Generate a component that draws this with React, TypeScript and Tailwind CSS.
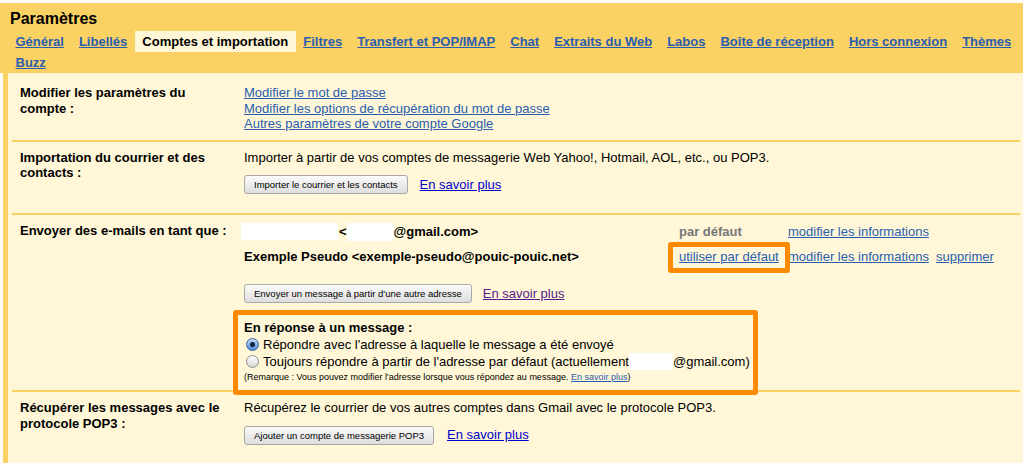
import React from 'react';

const tabs = [
  'Général',
  'Libellés',
  'Comptes et importation',
  'Filtres',
  'Transfert et POP/IMAP',
  'Chat',
  'Extraits du Web',
  'Labos',
  'Boîte de réception',
  'Hors connexion',
  'Thèmes',
  'Buzz',
];

const linkCls = 'text-[#2a5db0] underline';

const GrayButton = ({ children }: { children: React.ReactNode }) => (
  <button className="h-[19px] rounded-[3px] border border-[#a8a8a8] bg-gradient-to-b from-[#fbfbfb] to-[#dedede] px-[9px] text-[9.5px] leading-[17px] text-black whitespace-nowrap">
    {children}
  </button>
);

const Radio = ({ checked }: { checked?: boolean }) =>
  checked ? (
    <span className="inline-flex h-[13px] w-[13px] shrink-0 items-center justify-center rounded-full border border-[#3d5f9a] bg-gradient-to-b from-[#c4dcf6] to-[#4a8ad8]">
      <span className="h-[5px] w-[5px] rounded-full bg-[#10213f]" />
    </span>
  ) : (
    <span className="inline-block h-[13px] w-[13px] shrink-0 rounded-full border border-[#8d8d8d] bg-gradient-to-b from-white to-[#d6d6d6]" />
  );

const Row = ({
  label,
  first,
  className,
  children,
}: {
  label: string;
  first?: boolean;
  className?: string;
  children: React.ReactNode;
}) => (
  <div className={`flex pt-[8px] ${first ? '' : 'border-t-2 border-[#fad163]'} ${className ?? ''}`}>
    <div className="w-[232px] shrink-0 pl-[8px] pr-[16px] font-bold text-black">{label}</div>
    <div className="flex-1">{children}</div>
  </div>
);

export default function App() {
  return (
    <div className="h-[463px] overflow-hidden bg-white pt-[3px] font-['Liberation_Sans',Arial,sans-serif] text-[13px] leading-[15.5px] text-black">
      {/* header */}
      <div className="bg-[#fad163]">
        <div className="h-[28px] pl-[10px] pt-[6px] text-[16px] font-bold leading-[20px]">Paramètres</div>
        <div className="flex flex-wrap pl-[8px]">
          {tabs.map((t) =>
            t === 'Comptes et importation' ? (
              <span key={t} className="h-[21px] whitespace-nowrap bg-[#fff7d7] px-[7.5px] font-bold leading-[21px] text-black">
                {t}
              </span>
            ) : (
              <span key={t} className="h-[21px] whitespace-nowrap px-[7.5px] font-bold leading-[21px]">
                <a className="text-[#2a5db0] underline" href="#">
                  {t}
                </a>
              </span>
            ),
          )}
        </div>
      </div>

      {/* content */}
      <div className="ml-[3px] h-full border-l-[5px] border-[#fad163] bg-[#fff7d7] pl-[4px] pr-[3px] pt-[4px]">
        <Row label="Modifier les paramètres du compte :" first className="pb-[8px]">
          <div className="flex flex-col items-start">
            <a className={linkCls} href="#">Modifier le mot de passe</a>
            <a className={linkCls} href="#">Modifier les options de récupération du mot de passe</a>
            <a className={linkCls} href="#">Autres paramètres de votre compte Google</a>
          </div>
        </Row>

        <Row label="Importation du courrier et des contacts :" className="pb-[19px]">
          <div>Importer à partir de vos comptes de messagerie Web Yahoo!, Hotmail, AOL, etc., ou POP3.</div>
          <div className="mt-[10px] flex items-center gap-[12px]">
            <GrayButton>Importer le courrier et les contacts</GrayButton>
            <a className="text-[#0000cc] underline" href="#">En savoir plus</a>
          </div>
        </Row>

        <Row label="Envoyer des e-mails en tant que :">
          <div className="grid grid-cols-[435px_109px_148px_auto] leading-[17px]">
            <div className="flex h-[17px] items-center font-bold">
              <span className="ml-[-3px] inline-block h-[17px] w-[97px] bg-white" />
              <span className="ml-[1px]">&lt;</span>
              <span className="inline-block h-[18px] w-[47px] bg-white" />
              <span>@gmail.com&gt;</span>
            </div>
            <div className="font-bold text-[#777]">par défaut</div>
            <div>
              <a className={linkCls} href="#">modifier les informations</a>
            </div>
            <div />
          </div>
          <div className="mt-[8px] grid grid-cols-[435px_109px_148px_auto] leading-[17px]">
            <div className="font-bold">Exemple Pseudo &lt;exemple-pseudo@pouic-pouic.net&gt;</div>
            <div>
              <span className="relative inline-block">
                <span className="absolute -bottom-[8px] -left-[11px] -right-[11px] -top-[6px] rounded-[3px] border-[5px] border-[#ff8a00]" />
                <a className={`${linkCls} relative`} href="#">utiliser par défaut</a>
              </span>
            </div>
            <div>
              <a className={linkCls} href="#">modifier les informations</a>
            </div>
            <div>
              <a className={linkCls} href="#">supprimer</a>
            </div>
          </div>
          <div className="mt-[19px] flex items-center gap-[11px]">
            <GrayButton>Envoyer un message à partir d'une autre adresse</GrayButton>
            <a className="text-[#551a8b] underline" href="#">En savoir plus</a>
          </div>
          <div className="relative z-10 -mb-[5px] ml-[-11px] mt-[7px] w-[525px] rounded-[3px] border-[5px] border-[#ff8a00] bg-[#fff7d7] pb-[6px] pl-[6px] pt-[5px]">
            <div className="font-bold leading-[16px]">En réponse à un message :</div>
            <div className="flex h-[17px] items-center gap-[4px] whitespace-nowrap pl-[2px]">
              <Radio checked />
              <span>Répondre avec l'adresse à laquelle le message a été envoyé</span>
            </div>
            <div className="flex h-[17px] items-center whitespace-nowrap pl-[2px]">
              <Radio />
              <span className="ml-[4px]">Toujours répondre à partir de l'adresse par défaut (actuellement</span>
              <span className="inline-block h-[17px] w-[44px] shrink-0 bg-white" />
              <span>@gmail.com)</span>
            </div>
            <div className="mt-[1px] whitespace-nowrap text-[9px] leading-[13px]">
              (Remarque : Vous pouvez modifier l'adresse lorsque vous répondez au message.{' '}
              <a className={linkCls} href="#">En savoir plus</a>)
            </div>
          </div>
        </Row>

        <Row label="Récupérer les messages avec le protocole POP3 :" className="pb-[20px]">
          <div>Récupérez le courrier de vos autres comptes dans Gmail avec le protocole POP3.</div>
          <div className="mt-[10px] flex items-center gap-[13px]">
            <GrayButton>Ajouter un compte de messagerie POP3</GrayButton>
            <a className="text-[#0000cc] underline" href="#">En savoir plus</a>
          </div>
        </Row>
      </div>
    </div>
  );
}
